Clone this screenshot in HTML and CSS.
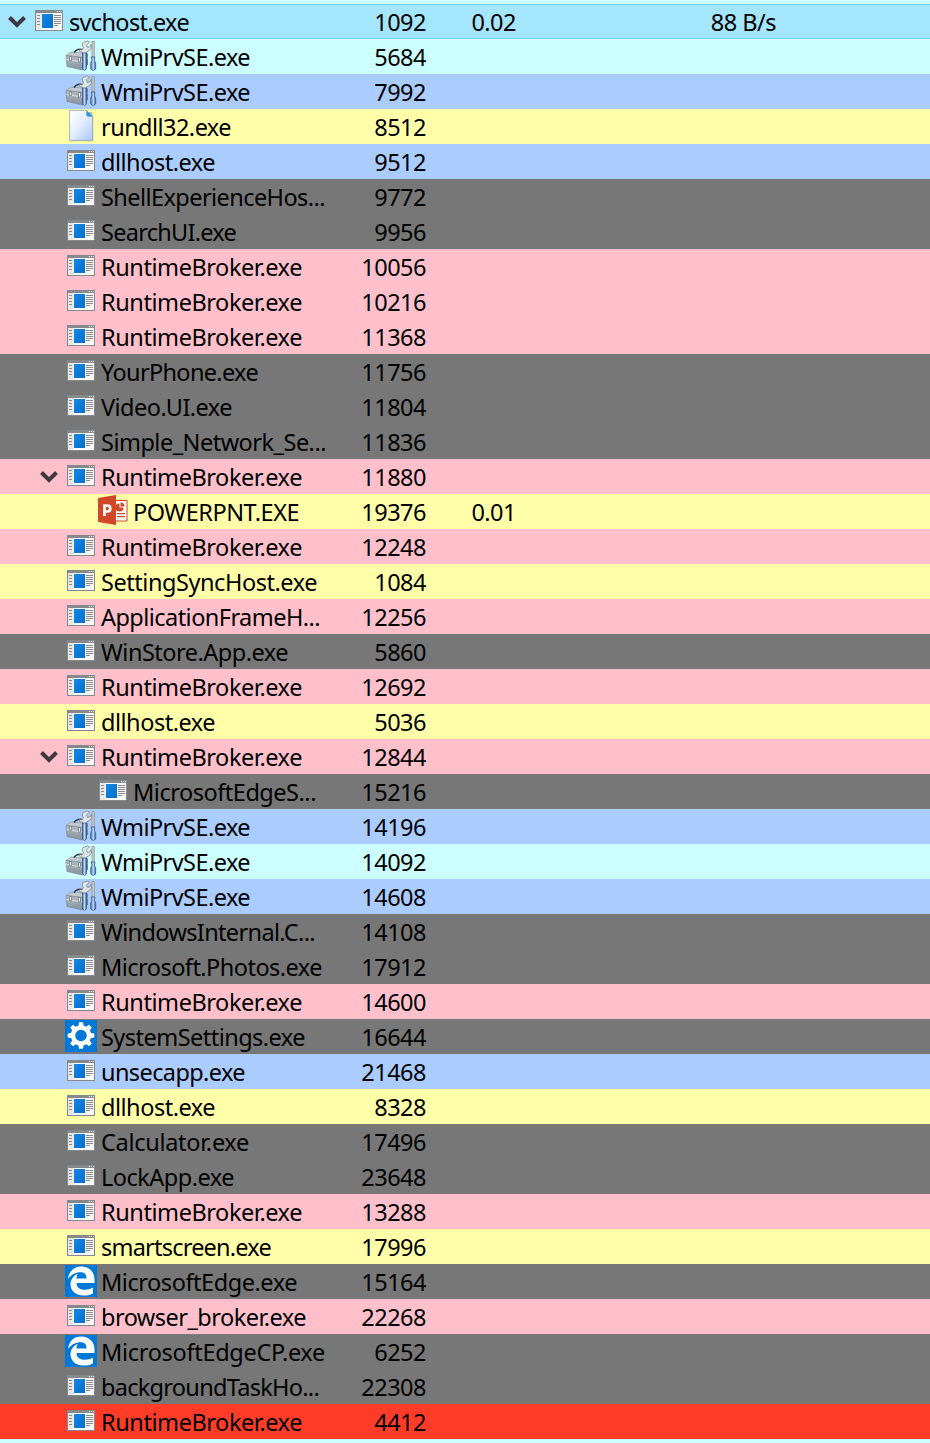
FILE: index.html
```html
<!DOCTYPE html>
<html lang="en">
<head>
<meta charset="utf-8">
<title>Processes</title>
<link rel="stylesheet" href="styles.css">
</head>
<body>
<svg class="defs" width="0" height="0">
  <defs>
    <linearGradient id="box" x1="0" y1="0" x2="0" y2="1"><stop offset="0" stop-color="#b4bdc2"/><stop offset="1" stop-color="#84919a"/></linearGradient>
    <linearGradient id="handle" x1="0" y1="0" x2="1" y2="0"><stop offset="0" stop-color="#3b68ad"/><stop offset=".5" stop-color="#c0dbf8"/><stop offset="1" stop-color="#315b9d"/></linearGradient>
    <linearGradient id="page" x1="0" y1="0" x2="1" y2="1"><stop offset="0" stop-color="#fff"/><stop offset=".45" stop-color="#e7efff"/><stop offset="1" stop-color="#a9c8fb"/></linearGradient>
    <linearGradient id="screen" x1="0" y1="0" x2="1" y2="1"><stop offset="0" stop-color="#1687e4"/><stop offset="1" stop-color="#006fd0"/></linearGradient>
  </defs>
  <symbol id="app" viewBox="0 0 32 35">
    <path fill="#85898c" d="M2 6h28v21H2z"/>
    <path fill="#fafafa" d="M3 9h26v17H3z"/>
    <path fill="#e4e6e7" d="M3 9h5v17H3z"/>
    <path fill="#fff" d="M24 7h1v1h-1zM26 7h1v1h-1zM28 7h1v1h-1z"/>
    <path fill="url(#screen)" d="M9 10h11v14H9z"/>
    <path stroke="#888c90" d="M4 11.500h3M4 14.500h3M4 17.500h3M4 20.500h3M21 11.500h7M21 13.500h7M21 15.500h7M21 17.500h7M21 19.500h7M21 21.500h4"/>
  </symbol>
  <symbol id="tools" viewBox="0 0 32 35">
    <path fill="#c3cacf" stroke="#87929a" stroke-width=".6" d="M1 16.500l5-3.500 17 1.500-5 4z"/>
    <path fill="url(#box)" stroke="#75828a" stroke-width=".6" d="M1 16.500l16.500 2V31L2 27.500z"/>
    <path fill="#75838e" d="M17.500 18.500l5.500-4v11L17.500 31z"/>
    <path fill="none" stroke="#dce2e5" d="M1.500 20.500l16 2.500 5-4"/>
    <path fill="none" stroke="#30383e" stroke-width="1.500" d="M9 13.500c2-3 6-4 9-2.500"/>
    <path fill="#f4f6f7" stroke="#555d62" stroke-width=".6" d="M4.500 17.500h2v4h-2zM13.500 18.500h2v4.500h-2z"/>
    <path fill="#dfe3e3" stroke="#7e8588" stroke-width=".8" d="M18 3.500l4.500-1.500 2 1-3 3 1 2.500 3-1 .5-2c2 3-.5 6-4.500 7.500V16h-4v-3c-2 1-3.500-.5-3-2.500l2.500.5 1.500-2.500c-1.500-2-1.500-3.500-.5-5z"/>
    <path fill="url(#handle)" stroke="#315994" stroke-width=".7" d="M17.500 14h4v15.500q-2 4-4 0z"/>
    <path fill="#d0d0cb" stroke="#858a8c" stroke-width=".7" d="M27 2.500h2.300V18H27z"/>
    <path fill="url(#handle)" stroke="#315994" stroke-width=".7" d="M26 18h4l-.7 3 1.400 3v6q-2.500 3-5 0v-6l1.300-3z"/>
  </symbol>
  <symbol id="file" viewBox="0 0 32 35">
    <path fill="#777c80" opacity=".5" d="M6 3h21l1.300 5v24.300H5z"/>
    <path fill="url(#page)" stroke="#9eabba" stroke-width=".8" d="M4.500 1.500h17l6 6v23.800h-23z"/>
    <path fill="#2494e6" stroke="#73a8d8" stroke-width=".6" d="M21.500 1.500l6 6h-4q-2 0-2-2z"/>
  </symbol>
  <symbol id="ppt" viewBox="0 0 32 35">
    <path fill="#fff" stroke="#d24726" d="M17 6.500h13v20.500H17z"/>
    <path fill="#d24726" d="M1 4l18-3v30L1 28z"/>
    <path fill="#d24726" d="M20 19h8v1.200h-8zM20 22h8v1.200h-8zM22.500 9.500a4 4 0 1 0 4 4h-4z"/>
    <path fill="#d24726" d="M23.500 8.500a4 4 0 0 1 4 4h-4z"/>
    <path fill="none" stroke="#fff" stroke-width="2.700" d="M7.500 22V11.500h2.800c4 0 4 6 0 6H7.500"/>
  </symbol>
  <symbol id="gear" viewBox="0 0 32 35">
    <path fill="#0078d7" d="M0 1h32v32H0z"/>
    <g transform="translate(16 16.500)">
      <circle r="8" fill="none" stroke="#fff" stroke-width="4.400"/>
      <g fill="#fff"><path id="tooth" d="M-2.700-9l.7-4.300h4l.7 4.300z"/>
      <use href="#tooth" transform="rotate(45)"/><use href="#tooth" transform="rotate(90)"/><use href="#tooth" transform="rotate(135)"/><use href="#tooth" transform="rotate(180)"/><use href="#tooth" transform="rotate(225)"/><use href="#tooth" transform="rotate(270)"/><use href="#tooth" transform="rotate(315)"/></g>
    </g>
  </symbol>
  <symbol id="edge" viewBox="0 0 32 35">
    <path fill="#0078d7" d="M0 1h32v32H0z"/>
    <path fill="#fff" d="M3 15C4 7 9 2.500 16 2.500c8.500 0 13.500 5.500 13.500 13V19H11.500c0 5 4 6.800 8.500 6.800 3 0 5.500-.8 8-2.200v5.800c-3 1.600-6 2.100-9.500 2.100C11 31.500 5.500 27 5.500 20.500c0-5 3-8.800 7.500-10.800-1.100 1.400-1.500 3-1.600 4.800H21.500c0-4-1.800-6.200-5.800-6.200-5 0-9.900 2.700-12.700 6.700z"/>
  </symbol>
  <symbol id="chevron" viewBox="0 0 18 35">
    <path fill="none" stroke="currentColor" stroke-width="4" d="M1.500 13.500l7.500 7.500 7.500-7.500"/>
  </symbol>
</svg>
<main id="list" class="list"></main>
<script src="app.js"></script>
</body>
</html>
```

FILE: styles.css
```css
body {
  margin: 0;
  background: #ccffff;
  color: #000;
  font: 23.5px/37px "Noto Sans", "Open Sans", sans-serif;
}
.defs { display: block; }
.list { padding-top: 4px; }
.row {
  display: grid;
  grid-template-columns: 340px 86px 90px 260px;
  height: 35px;
  white-space: pre;
}
.name { display: flex; padding-left: 33px; }
.depth-0 .name { padding-left: 1px; }
.depth-2 .name { padding-left: 65px; }
.toggle { flex: none; width: 32px; height: 35px; }
.chevron { display: block; width: 18px; height: 35px; margin-left: 7px; color: #403840; }
.icon { flex: none; width: 32px; height: 35px; margin-right: 4px; }
.num { text-align: right; letter-spacing: -0.5px; }
.cyan { background: #ccffff; }
.blue { background: #aaccff; }
.yellow { background: #ffffaa; }
.gray { background: #777777; }
.pink { background: #ffc0cb; }
.red { background: #ff3c28; }
.selected {
  background: #a5e6ff;
  box-shadow: inset 0 1px #77ccff, inset 0 -1px #77ccff;
}
```

FILE: app.js
```js
// name, pid, row colour, drawn name width, icon, depth, expanded, cpu, io
const rows = [
  ["svchost.exe", 1092, "selected", 120, "app", 0, true, "0.02", "88 B/s"],
  ["WmiPrvSE.exe", 5684, "cyan", 149, "tools"],
  ["WmiPrvSE.exe", 7992, "blue", 149, "tools"],
  ["rundll32.exe", 8512, "yellow", 130, "file"],
  ["dllhost.exe", 9512, "blue", 114],
  ["ShellExperienceHos...", 9772, "gray", 224],
  ["SearchUI.exe", 9956, "gray", 135],
  ["RuntimeBroker.exe", 10056, "pink", 201],
  ["RuntimeBroker.exe", 10216, "pink", 201],
  ["RuntimeBroker.exe", 11368, "pink", 201],
  ["YourPhone.exe", 11756, "gray", 157],
  ["Video.UI.exe", 11804, "gray", 131],
  ["Simple_Network_Se...", 11836, "gray", 225],
  ["RuntimeBroker.exe", 11880, "pink", 201, "app", 1, true],
  ["POWERPNT.EXE", 19376, "yellow", 166, "ppt", 2, false, "0.01"],
  ["RuntimeBroker.exe", 12248, "pink", 201],
  ["SettingSyncHost.exe", 1084, "yellow", 216],
  ["ApplicationFrameH...", 12256, "pink", 219],
  ["WinStore.App.exe", 5860, "gray", 187],
  ["RuntimeBroker.exe", 12692, "pink", 201],
  ["dllhost.exe", 5036, "yellow", 114],
  ["RuntimeBroker.exe", 12844, "pink", 201, "app", 1, true],
  ["MicrosoftEdgeS...", 15216, "gray", 183, "app", 2],
  ["WmiPrvSE.exe", 14196, "blue", 149, "tools"],
  ["WmiPrvSE.exe", 14092, "cyan", 149, "tools"],
  ["WmiPrvSE.exe", 14608, "blue", 149, "tools"],
  ["WindowsInternal.C...", 14108, "gray", 214],
  ["Microsoft.Photos.exe", 17912, "gray", 221],
  ["RuntimeBroker.exe", 14600, "pink", 201],
  ["SystemSettings.exe", 16644, "gray", 204, "gear"],
  ["unsecapp.exe", 21468, "blue", 144],
  ["dllhost.exe", 8328, "yellow", 114],
  ["Calculator.exe", 17496, "gray", 148],
  ["LockApp.exe", 23648, "gray", 133],
  ["RuntimeBroker.exe", 13288, "pink", 201],
  ["smartscreen.exe", 17996, "yellow", 170],
  ["MicrosoftEdge.exe", 15164, "gray", 196, "edge"],
  ["browser_broker.exe", 22268, "pink", 205],
  ["MicrosoftEdgeCP.exe", 6252, "gray", 224, "edge"],
  ["backgroundTaskHo...", 22308, "gray", 218],
  ["RuntimeBroker.exe", 4412, "red", 201]
];
const list = document.getElementById("list");
list.innerHTML = rows.map(([name, pid, color, width, icon = "app", depth = 1, open = false, cpu = "", io = ""]) =>
  `<div class="row depth-${depth} ${color}">
    <div class="name"><span class="toggle">${open ? '<svg class="chevron"><use href="#chevron"/></svg>' : ""}</span><svg class="icon"><use href="#${icon}"/></svg><span class="label" data-width="${width}">${name}</span></div>
    <div class="num">${pid}</div><div class="num">${cpu}</div><div class="num">${io}</div>
  </div>`).join("");

document.querySelectorAll(".label").forEach(el => {
  const natural = el.getBoundingClientRect().width;
  const target = Number(el.dataset.width);
  el.style.letterSpacing = (target - natural) / el.textContent.length + "px";
});
```
